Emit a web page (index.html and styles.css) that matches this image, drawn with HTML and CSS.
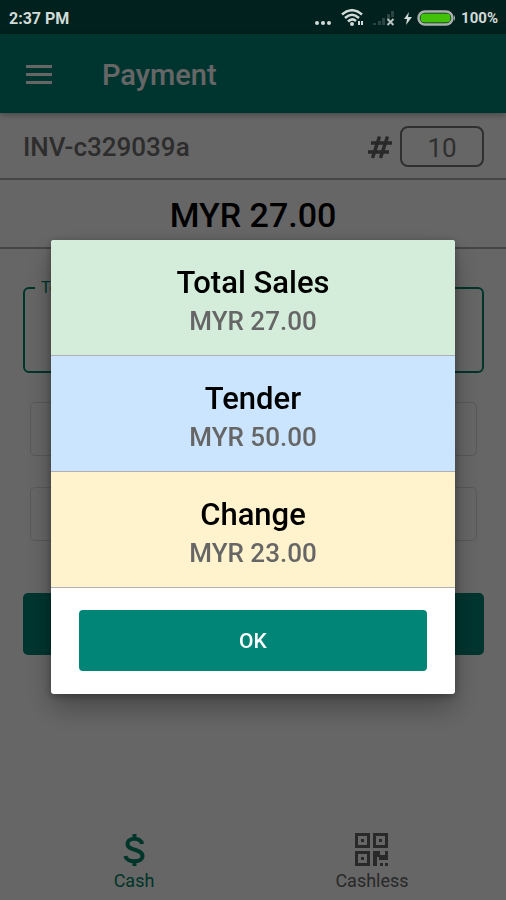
FILE: index.html
```html
<!DOCTYPE html>
<html lang="en">
<head>
<meta charset="utf-8">
<meta name="viewport" content="width=device-width, initial-scale=1">
<title>Payment</title>
<link rel="stylesheet" href="styles.css">
</head>
<body>
<div class="status">
  <span>2:37 PM</span>
  <div class="status-icons">
    <svg width="18" height="18" viewBox="0 0 18 18" fill="#d3dbd9"><circle cx="3" cy="14" r="2"/><circle cx="9" cy="14" r="2"/><circle cx="15" cy="14" r="2"/></svg>
    <svg class="wifi" width="24" height="18" viewBox="0 0 24 18" fill="none" stroke="#d3dbd9" stroke-width="2.500"><path d="M1 5.500Q11-3 21 5.500M4 9Q11 2.500 18 9M7 12.500Q11 8.500 15 12"/><circle cx="11" cy="15" r="2" fill="#d3dbd9" stroke="none"/><path d="M18 12v4M21 12v4" stroke-width="2"/></svg>
    <svg class="signal" width="22" height="18" viewBox="0 0 22 18" fill="#2c4541"><path d="M0 14h3v2H0zM5 12h3v4H5zM9 9h3v7H9zM14 5h3v5h-3zM18 2h3v6h-3z"/><path d="M14.500 10l6 6M20.500 10l-6 6" stroke="#b9c2c0" stroke-width="2"/></svg>
    <svg class="bolt" width="10" height="18" viewBox="0 0 10 18" fill="#d3dbd9"><path d="M6 3L1 10h3L3 16l6-8H5z"/></svg>
    <svg class="battery" width="39" height="18" viewBox="0 0 39 18"><rect x="1.500" y="2.500" width="34" height="13" rx="6.500" fill="none" stroke="#a9b0ae" stroke-width="2.500"/><path d="M37 6q2 3 0 6z" fill="#a9b0ae"/><rect x="3.500" y="4.500" width="30" height="9" rx="4" fill="#42c10b"/></svg>
    <span class="percent">100%</span>
  </div>
</div>
<header class="bar">
  <button class="menu" aria-label="Menu"><svg width="26" height="20" viewBox="0 0 26 20" fill="#fff"><path d="M0 0h26v3H0zM0 8h26v3H0zM0 16h26v3H0z"/></svg></button>
  <h1>Payment</h1>
</header>
<main>
  <section class="invoice">
    <label class="invoice-no" for="number">INV-c329039a</label>
    <svg class="hash" width="26" height="24" viewBox="0 0 26 24" fill="none" stroke="#666" stroke-width="3.500"><path d="M12.500 1.500L5.500 23M20.500 1.500l-7 21.500M4 8h21M1 17h21"/></svg>
    <input id="number" class="number" type="text" value="10">
  </section>
  <p class="amount">MYR 27.00</p>
  <form class="entry">
    <div class="field"><label for="tender">Tender</label><input id="tender" type="text"></div>
    <div class="quick"></div>
    <div class="quick"></div>
    <button class="submit" type="button" aria-label="Pay"></button>
  </form>
</main>
<nav class="tabs">
  <a class="tab active" href="#cash">
    <svg width="36" height="36" viewBox="0 0 36 36" fill="none" stroke="currentColor" stroke-width="4"><path d="M26 12C25 5 11.500 5 11.500 12c0 7 15 4.500 15 12 0 7-16 7-17 0M18.500 2v5M18.500 29v5"/></svg>
    <span>Cash</span>
  </a>
  <a class="tab" href="#cashless">
    <svg width="36" height="36" viewBox="0 0 36 36" fill="none" stroke="currentColor" stroke-width="3"><path d="M2.500 2.500h12v12h-12zM20.500 2.500h12v12h-12zM2.500 20.500h12v12h-12z"/><path fill="currentColor" stroke="none" d="M7 7h3v3H7zM25 7h3v3h-3zM7 25h3v3H7zM19 19h7v4h5v-4h3v9h-9v-3h-2v9h-4zM26 31h3v3h-3zM31 31h3v3h-3z"/></svg>
    <span>Cashless</span>
  </a>
</nav>
<div class="scrim">
  <div class="dialog" role="dialog" aria-modal="true">
    <section class="row sales"><h2>Total Sales</h2><p>MYR 27.00</p></section>
    <section class="row tendered"><h2>Tender</h2><p>MYR 50.00</p></section>
    <section class="row change"><h2>Change</h2><p>MYR 23.00</p></section>
    <div class="actions"><button class="ok" type="button">OK</button></div>
  </div>
</div>
</body>
</html>
```
FILE: styles.css
```css
* { box-sizing: border-box; }
body {
  margin: 0;
  min-height: 100vh;
  display: flex;
  flex-direction: column;
  background: #fff;
  font-family: Roboto, "Liberation Sans", sans-serif;
}
h1, h2, p { margin: 0; }
button, input { font: inherit; }
button { border: 0; padding: 0; }

.status {
  height: 34px;
  padding: 2px 8px 0 9px;
  display: flex;
  align-items: center;
  justify-content: space-between;
  background: #00211d;
  color: #d3dbd9;
  font-size: 16px;
  font-weight: 700;
}
.status-icons { display: flex; align-items: center; }
.wifi { margin-left: 9px; }
.signal { margin-left: 8px; }
.bolt { margin-left: 8px; }
.battery { margin: 0 5px 0 4px; }
.percent { font-size: 15px; }

.bar {
  height: 79px;
  padding: 2px 26px 0;
  display: flex;
  align-items: center;
  gap: 50px;
  background: #008577;
  color: #fff;
  box-shadow: 0 2px 6px rgba(0, 0, 0, .3);
}
.menu { display: flex; background: none; }
.bar h1 { font-size: 29px; font-weight: 500; }

main { flex: 1; }
.invoice {
  height: 67px;
  padding: 2px 22px 0 23px;
  display: flex;
  align-items: center;
  border-bottom: 2px solid #aaa;
}
.invoice-no { flex: 1; color: #707070; font-size: 26px; font-weight: 500; }
.hash { margin-right: 7px; }
.number {
  width: 84px;
  height: 41px;
  padding: 2px 0 0;
  border: 2px solid #777;
  border-radius: 8px;
  background: none;
  color: #777;
  font-size: 26px;
  text-align: center;
}
.amount {
  height: 69px;
  padding-top: 2px;
  border-bottom: 2px solid #aaa;
  color: #000;
  font-size: 34px;
  font-weight: 500;
  line-height: 66px;
  text-align: center;
}
.entry {
  padding: 38px 22px 0 23px;
  display: flex;
  flex-direction: column;
}
.field {
  position: relative;
  height: 86px;
  margin-bottom: 29px;
  border: 2px solid #008568;
  border-radius: 6px;
}
.field label {
  position: absolute;
  top: -11px;
  left: 10px;
  padding: 0 6px;
  background: #fff;
  color: #008568;
  font-size: 16px;
  line-height: 20px;
}
.field input {
  width: 100%;
  height: 100%;
  border: 0;
  background: none;
}
.quick {
  height: 54px;
  margin: 0 7px 31px 7px;
  border: 1px solid #ddd;
  border-radius: 5px;
}
.submit {
  height: 62px;
  margin-top: 21px;
  border-radius: 5px;
  background: #008577;
}

.tabs { display: flex; padding: 14px 15px 6px; }
.tab {
  flex: 1;
  display: flex;
  flex-direction: column;
  align-items: center;
  color: #666;
  font-size: 18px;
  line-height: 26px;
  text-decoration: none;
}
.tab.active { color: #008568; }

.scrim {
  position: fixed;
  inset: 34px 0 0;
  display: flex;
  align-items: center;
  justify-content: center;
  background: rgba(0, 0, 0, .6);
}
.dialog {
  width: 80%;
  overflow: hidden;
  border-radius: 3px;
  background: #fff;
  text-align: center;
  box-shadow: 0 14px 28px rgba(0, 0, 0, .3), 0 2px 8px rgba(0, 0, 0, .3);
}
.row { padding: 24px 0 15px; border-bottom: 1px solid #b0b0b4; }
.row h2 { color: #000; font-size: 31px; font-weight: 500; line-height: 38px; }
.row p { color: #666; font-size: 26px; font-weight: 500; line-height: 38px; }
.sales { background: #d4edda; }
.tendered { background: #cce5ff; }
.change { background: #fff3cd; }
.actions { padding: 22px 28px 23px; }
.ok {
  display: block;
  width: 100%;
  height: 61px;
  border-radius: 4px;
  background: #008577;
  color: #fff;
  font-size: 21px;
  font-weight: 500;
}
```
